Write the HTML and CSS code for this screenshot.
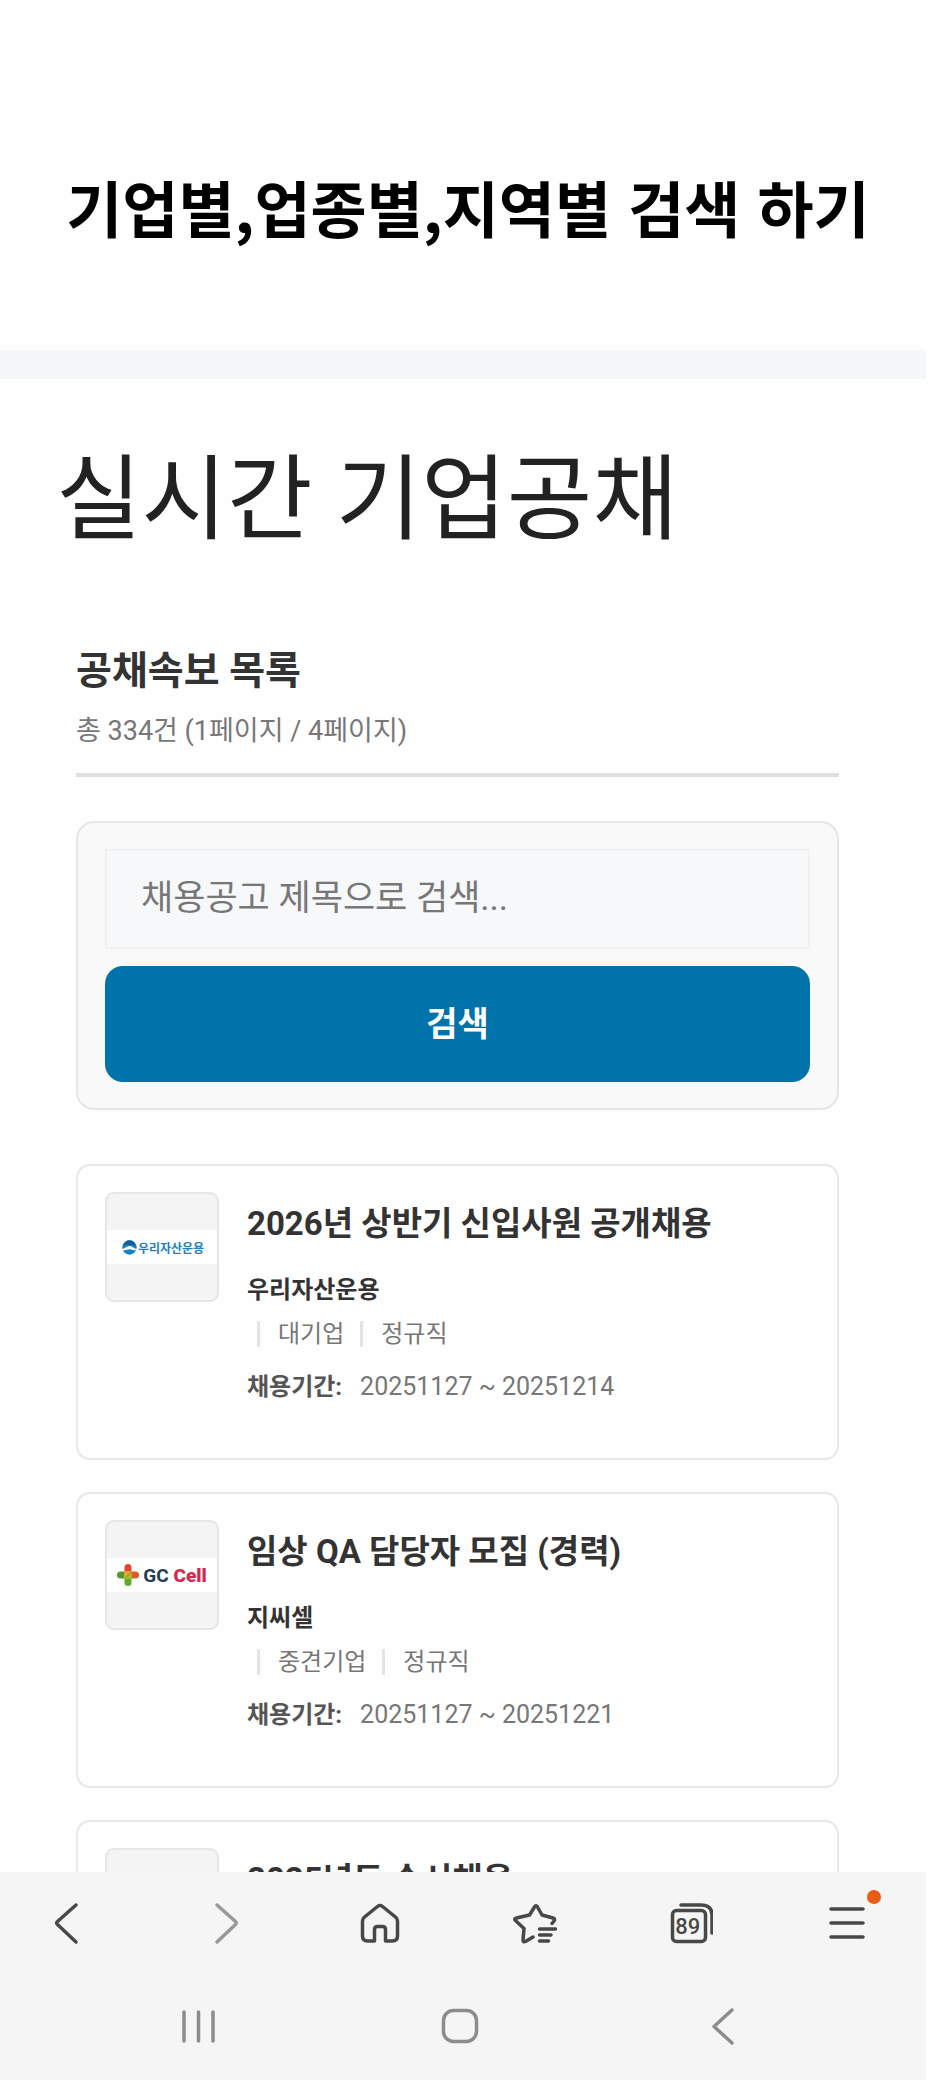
FILE: index.html
```html
<!DOCTYPE html>
<html lang="ko">
<head>
<meta charset="utf-8">
<meta name="viewport" content="width=device-width, initial-scale=1">
<title>실시간 기업공채</title>
<link rel="stylesheet" href="styles.css">
</head>
<body>
<div class="app">
  <header class="banner">
    <p class="banner-text">기업별,업종별,지역별 검색 하기</p>
  </header>
  <main class="content">
    <h1 class="page-title">실시간 기업공채</h1>
    <section class="board">
      <div class="board-head">
        <h2 class="board-title">공채속보 목록</h2>
        <p class="board-count">총 334건 (1페이지 / 4페이지)</p>
      </div>
      <form class="search">
        <input class="search-input" type="text" aria-label="채용공고 제목" placeholder="채용공고 제목으로 검색...">
        <button class="search-button" type="button">검색</button>
      </form>
      <div class="cards">
        <article class="card">
          <div class="logo">
            <div class="logo-strip logo-woori">
              <svg class="logo-mark" viewBox="0 0 15 15" aria-hidden="true">
                <circle cx="7.5" cy="7.5" r="7.2" fill="#1683bd"/>
                <path d="M1 5C3 1.500 5 .3 7.500.3S12 1.500 14 5z" fill="#155f9c"/>
                <path d="M0 9C3.500 8.500 5 6 7.500 6s4 2.500 7.500 3v1.200c-4 .3-5-1-7.500-1s-3.500 1.300-7.500 1z" fill="#fff"/>
              </svg>
              <span>우리자산운용</span>
            </div>
          </div>
          <div class="info">
            <h3 class="job-title">2026년 상반기 신입사원 공개채용</h3>
            <p class="company">우리자산운용</p>
            <ul class="meta"><li>대기업</li><li>정규직</li></ul>
            <p class="period"><strong>채용기간:</strong><span>20251127 ~ 20251214</span></p>
          </div>
        </article>
        <article class="card">
          <div class="logo">
            <div class="logo-strip logo-gc">
              <svg class="logo-plus" viewBox="0 0 22 22" aria-hidden="true">
                <rect x="0" y="7.500" width="14" height="7" rx="3.500" fill="#4c9a35"/>
                <rect x="8" y="7.500" width="14" height="7" rx="3.500" fill="#dc5a2b"/>
                <rect x="7.500" y="0" width="7" height="14" rx="3.500" fill="#e2452c"/>
                <rect x="7.500" y="8" width="7" height="14" rx="3.500" fill="#5fab2e"/>
                <path d="M7 7h8l-8 8z" fill="#efa02c"/>
                <path d="M15 8v7H8z" fill="#a8b92d"/>
              </svg>
              <span>GC <b>Cell</b></span>
            </div>
          </div>
          <div class="info">
            <h3 class="job-title">임상 QA 담당자 모집 (경력)</h3>
            <p class="company">지씨셀</p>
            <ul class="meta"><li>중견기업</li><li>정규직</li></ul>
            <p class="period"><strong>채용기간:</strong><span>20251127 ~ 20251221</span></p>
          </div>
        </article>
        <article class="card">
          <div class="logo"></div>
          <div class="info">
            <h3 class="job-title">2025년도 수시채용</h3>
          </div>
        </article>
      </div>
    </section>
  </main>
  <footer class="bars">
    <nav class="toolbar" aria-label="브라우저 메뉴">
      <button class="bar-button" type="button" aria-label="뒤로">
        <svg class="icon" viewBox="0 0 44 44"><path d="M32 4 13.500 20.500q-1.700 1.500 0 3L32 41"/></svg>
      </button>
      <button class="bar-button muted" type="button" aria-label="앞으로">
        <svg class="icon" viewBox="0 0 44 44"><path d="M17 4l18.500 16.500q1.700 1.500 0 3L17 41"/></svg>
      </button>
      <button class="bar-button" type="button" aria-label="홈">
        <svg class="icon" viewBox="0 0 44 44"><path d="M21.500 5.500q2.500-2 5 0l13 10.500q2 1.700 2 4V35q0 5-5 5h-7V28.500q0-3-3-3h-5q-3 0-3 3V40h-7q-5 0-5-5V20q0-2.300 2-4z"/></svg>
      </button>
      <button class="bar-button" type="button" aria-label="북마크">
        <svg class="icon" viewBox="0 0 44 44"><path d="M39 22.500 41 20q1.500-2.500-1-3L29 14 24.500 6q-1.500-2.500-3 0L16.500 14 3.500 17q-3 .8-.8 2.800L11 27.500 10 39q0 2.500 2.500 1.500l7.500-4.500M26.500 28h16M26.500 34h11.500M26.500 40h9"/></svg>
      </button>
      <button class="bar-button" type="button" aria-label="탭 89개">
        <svg class="icon" viewBox="0 0 44 44"><rect x="3.500" y="9.500" width="33" height="31" rx="4"/><path d="M12 4h20q11 0 11 10v18"/></svg>
        <span class="tab-count">89</span>
      </button>
      <button class="bar-button" type="button" aria-label="메뉴">
        <svg class="icon" viewBox="0 0 44 44"><path d="M6 8h32M6 22h32M6 36h32"/></svg>
        <span class="badge"></span>
      </button>
    </nav>
    <nav class="system" aria-label="시스템 탐색">
      <button class="bar-button soft" type="button" aria-label="최근 앱">
        <svg class="icon" viewBox="0 0 44 44"><path d="M8 7v29M22.500 7v29M37 7v29"/></svg>
      </button>
      <button class="bar-button soft" type="button" aria-label="홈 화면">
        <svg class="icon" viewBox="0 0 44 44"><rect x="4.500" y="5.500" width="33" height="31" rx="10"/></svg>
      </button>
      <button class="bar-button soft" type="button" aria-label="이전">
        <svg class="icon" viewBox="0 0 44 44"><path d="M31 5 13 21.500 31 38"/></svg>
      </button>
    </nav>
  </footer>
</div>
</body>
</html>
```
FILE: styles.css
```css
* {
  box-sizing: border-box;
}

body,
h1,
h2,
h3,
p,
ul {
  margin: 0;
  padding: 0;
}

body {
  background: #fefefe;
  color: #333;
  font-family: Roboto, "Noto Sans CJK KR", sans-serif;
}

button,
input {
  font-family: inherit;
}

.app {
  display: flex;
  flex-direction: column;
  height: 100vh;
  margin-right: 10px;
}

.banner {
  flex: none;
  padding: 161px 0 97px 10px;
  border-bottom: 29px solid #f6f7f9;
}

.banner-text {
  color: #000;
  font-family: "Noto Sans CJK KR", sans-serif;
  font-size: 61px;
  font-weight: 700;
  line-height: 92px;
  text-align: center;
  white-space: nowrap;
}

.content {
  flex: 1;
  min-height: 0;
  overflow: hidden;
  padding: 60px 87px 0 56px;
}

.page-title {
  color: #222;
  font-size: 93px;
  font-weight: 400;
  line-height: 124px;
}

.board {
  margin: 78px 0 0 20px;
}

.board-head {
  padding-bottom: 22px;
  border-bottom: 4px solid #e0e0e0;
}

.board-title {
  font-size: 39px;
  font-weight: 700;
  line-height: 60px;
}

.board-count {
  color: #777;
  font-size: 27px;
  line-height: 40px;
  margin-top: 10px;
}

.search {
  display: flex;
  flex-direction: column;
  gap: 17px;
  margin-top: 44px;
  padding: 26px 27px;
  border: 2px solid #e6e6e6;
  border-radius: 18px;
  background: #f9f9f9;
}

.search-input {
  width: 100%;
  height: 100px;
  padding: 0 34px 2px;
  border: 2px solid #f0f1f2;
  background: #f6f8fa;
  color: #333;
  font-size: 35px;
}

.search-input::placeholder {
  color: #777;
}

.search-button {
  height: 116px;
  padding: 0 0 6px;
  border: 0;
  border-radius: 18px;
  background: #0073aa;
  color: #fff;
  font-size: 34px;
  font-weight: 700;
}

.cards {
  display: grid;
  gap: 32px;
  margin-top: 54px;
}

.card {
  display: flex;
  gap: 28px;
  min-height: 296px;
  padding: 26px 27px;
  border: 2px solid #e8e8e8;
  border-radius: 14px;
}

.logo {
  display: flex;
  flex: none;
  align-items: center;
  width: 114px;
  height: 110px;
  border: 2px solid #e6e6e6;
  border-radius: 9px;
  background: #f4f4f4;
}

.logo-strip {
  display: flex;
  flex: 1;
  align-items: center;
  justify-content: center;
  height: 34px;
  background: #fff;
  white-space: nowrap;
}

.logo-woori {
  gap: 1px;
  padding-left: 2px;
  color: #2580ba;
  font-size: 12px;
  font-weight: 700;
}

.logo-mark {
  width: 15px;
  height: 15px;
}

.logo-gc {
  gap: 4px;
  color: #263b54;
  font-size: 19px;
  font-weight: 700;
}

.logo-gc b {
  color: #d7264f;
}

.logo-plus {
  width: 22px;
  height: 22px;
}

.job-title {
  font-size: 33px;
  font-weight: 700;
  line-height: 48px;
  padding-top: 8px;
}

.company {
  font-size: 24px;
  font-weight: 700;
  line-height: 36px;
  margin-top: 24px;
}

.meta {
  display: flex;
  gap: 16px;
  margin: 13px 0 0 10px;
  color: #777;
  font-size: 24px;
  line-height: 26px;
  list-style: none;
}

.meta li {
  padding-left: 18px;
  border-left: 3px solid #e4e4e4;
}

.period {
  display: flex;
  gap: 18px;
  margin-top: 22px;
  color: #777;
  font-size: 25px;
  line-height: 36px;
}

.period strong {
  color: #555;
  font-size: 24px;
}

.bars {
  flex: none;
  background: #f5f5f5;
}

.toolbar,
.system {
  display: flex;
  align-items: center;
  justify-content: space-between;
}

.toolbar {
  height: 102px;
  padding: 0 57px 0 44px;
}

.system {
  height: 106px;
  padding: 0 181px 0 176px;
}

.bar-button {
  position: relative;
  width: 44px;
  height: 44px;
  padding: 0;
  border: 0;
  background: none;
  color: #484848;
}

.muted {
  color: #999;
}

.soft {
  color: #8c8c8c;
}

.icon {
  display: block;
  width: 44px;
  height: 44px;
  fill: none;
  stroke: currentColor;
  stroke-width: 3.500;
  stroke-linecap: round;
  stroke-linejoin: round;
}

.tab-count {
  position: absolute;
  top: 10px;
  left: 3px;
  width: 32px;
  font-size: 22px;
  font-weight: 500;
  line-height: 31px;
  text-align: center;
}

.badge {
  position: absolute;
  top: -11px;
  right: -12px;
  width: 14px;
  height: 14px;
  border-radius: 50%;
  background: #ea5b15;
}
```
